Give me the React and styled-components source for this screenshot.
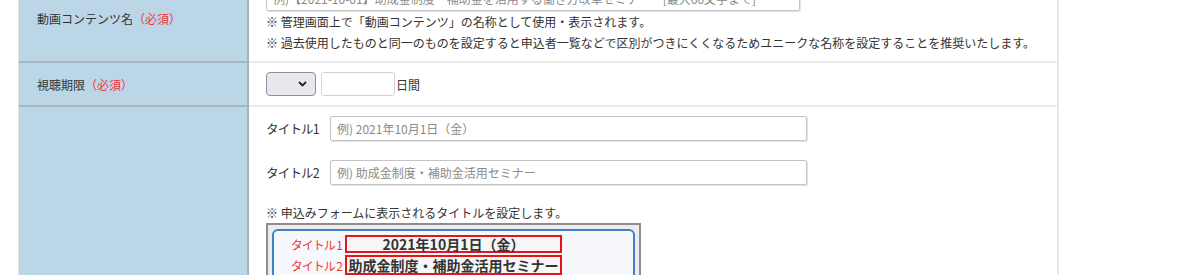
import React from 'react';
import styled, { createGlobalStyle } from 'styled-components';

const Global = createGlobalStyle`
  html, body { margin: 0; padding: 0; background: #fff; overflow: hidden; }
  body {
    font-family: "Noto Sans CJK JP", "Noto Sans", sans-serif;
    color: #333;
    font-size: 12px;
  }
`;

const Page = styled.div`
  padding-left: 18px;
  width: 1041px;
`;

const Table = styled.div`
  margin-top: -24px;
  border-left: 1px solid #e4e4e4;
  border-right: 2px solid #e8e8e8;
`;

const Row = styled.div`
  display: grid;
  grid-template-columns: 230px 1fr;
`;

const Label = styled.div`
  background: #bbd7e7;
  border-right: 2px solid #a6b2ba;
  border-bottom: 2px solid #a9b6bf;
  display: flex;
  align-items: center;
  padding-left: 18px;
  font-size: 12px;
  color: #333;
`;

const Required = styled.span`
  color: #f0383c;
`;

const Cell = styled.div`
  border-bottom: 2px solid #ebebeb;
  padding: ${p => p.$pad || '10px 17px 8px'};
`;

const TextInput = styled.input`
  box-sizing: border-box;
  width: ${p => p.$w}px;
  height: ${p => p.$h || 25}px;
  border: 1px solid #c4c4c4;
  border-radius: 2px;
  box-shadow: 1px 1px 1px rgba(0, 0, 0, 0.12);
  padding: 0 6px;
  font-family: "Noto Sans CJK JP", sans-serif;
  font-size: 12px;
  color: #333;
  background: #fff;
  &::placeholder { color: #8a8a8a; }
`;

const Notes = styled.div`
  line-height: 21px;
  font-size: 12px;
  color: #333;
`;

const Inline = styled.div`
  display: flex;
  align-items: center;
  gap: ${p => p.$gap || 4}px;
`;

const SelectWrap = styled.div`
  position: relative;
  width: 50px;
  height: 24px;
`;

const Select = styled.select`
  appearance: none;
  box-sizing: border-box;
  width: 100%;
  height: 100%;
  background: #e9e9ed;
  border: 1px solid #8f8f9d;
  border-radius: 4px;
`;

const Chevron = styled.svg`
  position: absolute;
  right: 9px;
  top: 9px;
  pointer-events: none;
`;

const SmallInput = styled.input`
  box-sizing: border-box;
  width: 74px;
  height: 24px;
  border: 1px solid #d2d2d2;
  border-radius: 3px;
`;

const Unit = styled.span`
  font-size: 12px;
  margin-left: -4px;
`;

const TitleRow = styled.div`
  display: flex;
  align-items: center;
  margin-bottom: ${p => p.$mb || 0}px;
`;

const TitleLabel = styled.span`
  width: 64px;
  font-size: 12.5px;
  letter-spacing: -0.8px;
  color: #333;
`;

const Note = styled.div`
  line-height: 20px;
  font-size: 12px;
  margin-top: 18px;
`;

const Preview = styled.div`
  box-sizing: border-box;
  width: 375px;
  height: 60px;
  border: 2px solid #8e8e8e;
  border-bottom: none;
  background: #ececec;
  padding: 4px 4px 0;
`;

const PreviewInner = styled.div`
  height: 100%;
  box-sizing: border-box;
  border: 2px solid #3f7fcc;
  border-bottom: none;
  border-radius: 6px 6px 0 0;
  background: #f6f8fb;
  padding: 4px 0 0 0;
  display: flex;
  flex-direction: column;
  gap: 2px;
`;

const PreviewRow = styled.div`
  display: flex;
  align-items: center;
`;

const PreviewLabel = styled.span`
  width: 71px;
  text-align: right;
  padding-right: 3px;
  box-sizing: border-box;
  color: #f0383c;
  font-size: 12px;
  letter-spacing: -1px;
  white-space: pre;
`;

const PreviewBox = styled.div`
  box-sizing: border-box;
  width: 217px;
  height: ${p => p.$h}px;
  border: 2px solid #e8141c;
  display: flex;
  align-items: center;
  justify-content: center;
  font-weight: bold;
  font-size: 14px;
  color: #333;
  line-height: 1;
  white-space: nowrap;
  background: #f6f6f6;
`;

export default function App() {
  return (
    <>
      <Global />
      <Page>
        <Table>
          <Row>
            <Label>動画コンテンツ名<Required>（必須）</Required></Label>
            <Cell>
              <TextInput
                $w={534}
                placeholder="例)【2021-10-01】助成金制度・補助金を活用する働き方改革セミナー　[最大60文字まで]"
              />
              <Notes>
                <div>※ 管理画面上で「動画コンテンツ」の名称として使用・表示されます。</div>
                <div>※ 過去使用したものと同一のものを設定すると申込者一覧などで区別がつきにくくなるためユニークな名称を設定することを推奨いたします。</div>
              </Notes>
            </Cell>
          </Row>
          <Row>
            <Label>視聴期限<Required>（必須）</Required></Label>
            <Cell $pad="9px 17px 9px">
              <Inline $gap={5}>
                <SelectWrap>
                  <Select defaultValue="">
                    <option value=""></option>
                  </Select>
                  <Chevron width="9" height="6" viewBox="0 0 9 6">
                    <path d="M1 1l3.5 3.5L8 1" fill="none" stroke="#222" strokeWidth="1.8" />
                  </Chevron>
                </SelectWrap>
                <SmallInput />
                <Unit>日間</Unit>
              </Inline>
            </Cell>
          </Row>
          <Row>
            <Label />
            <Cell $pad="9px 17px 0">
              <TitleRow $mb={19}>
                <TitleLabel>タイトル1</TitleLabel>
                <TextInput $w={477} placeholder="例) 2021年10月1日（金）" />
              </TitleRow>
              <TitleRow>
                <TitleLabel>タイトル2</TitleLabel>
                <TextInput $w={477} placeholder="例) 助成金制度・補助金活用セミナー" />
              </TitleRow>
              <Note>※ 申込みフォームに表示されるタイトルを設定します。</Note>
              <Preview>
                <PreviewInner>
                  <PreviewRow>
                    <PreviewLabel>タイトル 1</PreviewLabel>
                    <PreviewBox $h={18}>2021年10月1日（金）</PreviewBox>
                  </PreviewRow>
                  <PreviewRow>
                    <PreviewLabel>タイトル 2</PreviewLabel>
                    <PreviewBox $h={20}>助成金制度・補助金活用セミナー</PreviewBox>
                  </PreviewRow>
                </PreviewInner>
              </Preview>
            </Cell>
          </Row>
        </Table>
      </Page>
    </>
  );
}
